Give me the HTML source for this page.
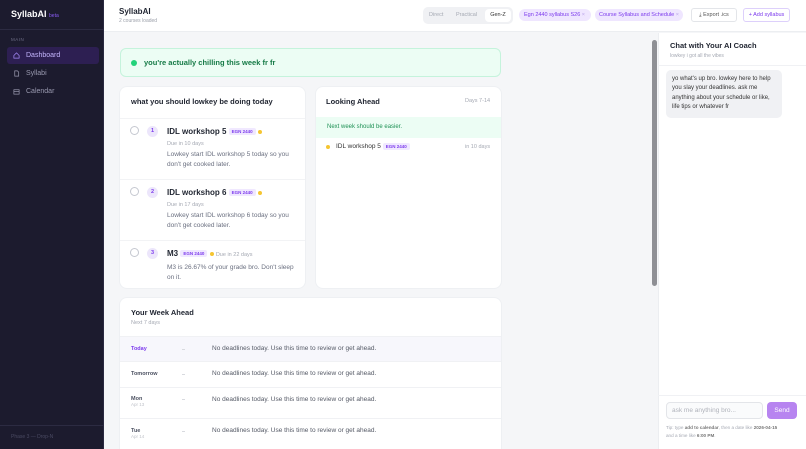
<!DOCTYPE html>
<html style="width:806px;height:449px;overflow:hidden"><head><meta charset="utf-8"><style>
*{box-sizing:border-box;margin:0;padding:0}
body{width:806px;height:449px;overflow:hidden;font-family:"Liberation Sans",sans-serif;background:#f5f6f8;position:relative;color:#1f2430}
.a{position:absolute}
.sb{left:0;top:0;width:104px;height:449px;background:#1c1b2e;border-right:1px solid #2a2940}
.nav{position:absolute;left:7px;width:92px;height:17px;font-size:7px;color:#9a9ab0;padding-left:19px;line-height:17px;border-radius:3px}
.nav svg{position:absolute;left:6px;top:5px}
.card{position:absolute;background:#fff;border-radius:7px;box-shadow:0 0 0 1px #eef0f3}
.tag{display:inline-block;background:#f0e8ff;color:#7c3aed;font-size:4.5px;font-weight:bold;padding:1px 3px;border-radius:2px;vertical-align:middle}
.dot{display:inline-block;width:4px;height:4px;border-radius:50%;background:#f5c531;vertical-align:middle}
.chk{position:absolute;width:9px;height:9px;border:1px solid #c5c8d0;border-radius:50%}
.num{position:absolute;width:11px;height:11px;border-radius:50%;background:#ece6fb;color:#7c3aed;font-size:5.5px;font-weight:bold;text-align:center;line-height:11px}
.t{position:absolute;font-size:8px;font-weight:bold;color:#1f2430}
.s{position:absolute;font-size:5.5px;color:#a5a9b3}
.d{position:absolute;font-size:6.5px;color:#6b7080;line-height:9.5px}
.row{position:absolute;left:0;width:381px;border-top:1px solid #f0f1f4}
.row .l{position:absolute;left:11px;font-size:5.5px;font-weight:bold;color:#4b5060}
.row .m{position:absolute;left:92px;font-size:6.5px;color:#555a66}
.row .x{position:absolute;left:62px;width:3px;height:1px;background:#d8dadf}
</style></head><body>
<div class="a sb">
 <div class="a" style="left:11px;top:9px;font-size:9px;font-weight:bold;color:#fff">SyllabAI <span style="font-size:5px;color:#8b5cf6;font-weight:normal">beta</span></div>
 <div class="a" style="left:0;top:29px;width:104px;height:1px;background:#2c2b42"></div>
 <div class="a" style="left:11px;top:37px;font-size:4.5px;color:#6e6e86;letter-spacing:.5px">MAIN</div>
 <div class="nav" style="top:47px;background:#2d1f52;color:#c4b5fd"><svg width="7" height="7" viewBox="0 0 8 8"><path d="M1 4L4 1L7 4V7H1Z" fill="none" stroke="#a78bfa" stroke-width=".8"/></svg>Dashboard</div>
 <div class="nav" style="top:65px"><svg width="7" height="7" viewBox="0 0 8 8"><path d="M2 1H5L6.5 2.5V7H2Z" fill="none" stroke="#9a9ab0" stroke-width=".8"/></svg>Syllabi</div>
 <div class="nav" style="top:83px"><svg width="7" height="7" viewBox="0 0 8 8"><rect x="1" y="2" width="6" height="5" fill="none" stroke="#9a9ab0" stroke-width=".8"/><path d="M1 4H7" stroke="#9a9ab0" stroke-width=".8"/></svg>Calendar</div>
 <div class="a" style="left:0;top:425px;width:104px;height:1px;background:#2c2b42"></div>
 <div class="a" style="left:11px;top:434px;font-size:5px;color:#4a4a62">Phase 3 — Drop-N</div>
</div>
<div class="a" style="left:104px;top:0;width:702px;height:32px;background:#fff;border-bottom:1px solid #eceef1"></div>
<div class="a" style="left:119px;top:7px;font-size:8px;font-weight:bold">SyllabAI</div>
<div class="a" style="left:119px;top:18px;font-size:5px;color:#9ca0aa">2 courses loaded</div>
<div class="a" style="left:423px;top:7px;width:90px;height:17px;background:#f0f1f4;border-radius:5px;font-size:5.5px;color:#a5a9b3">
 <span class="a" style="left:6px;top:5px">Direct</span><span class="a" style="left:33px;top:5px">Practical</span>
 <span class="a" style="left:62px;top:2px;width:26px;height:13px;background:#fff;border-radius:4px;color:#333;text-align:center;line-height:13px">Gen-Z</span></div>
<div class="a" style="left:519px;top:9px;width:72px;height:12px;background:#efe6ff;border-radius:6px;font-size:5.5px;color:#7c3aed;line-height:12px;padding-left:5px">Egn 2440 syllabus S26 <span style="color:#b9a3e8">×</span></div>
<div class="a" style="left:595px;top:9px;width:88px;height:12px;background:#efe6ff;border-radius:6px;font-size:5.5px;color:#7c3aed;line-height:12px;padding-left:4px">Course Syllabus and Schedule <span style="color:#b9a3e8">×</span></div>
<div class="a" style="left:691px;top:8px;width:46px;height:14px;border:1px solid #e3e5e9;border-radius:3px;font-size:5.5px;color:#555;line-height:12px;text-align:center">⤓ Export .ics</div>
<div class="a" style="left:743px;top:8px;width:47px;height:14px;border:1px solid #ddd0fb;border-radius:3px;font-size:5.5px;color:#7c3aed;line-height:12px;text-align:center">+ Add syllabus</div>

<div class="a" style="left:120px;top:48px;width:381px;height:29px;background:#ecfdf4;border:1px solid #c5f3dc;border-radius:6px"></div>
<div class="a" style="left:131px;top:60px;width:6px;height:6px;border-radius:50%;background:#22d37a"></div>
<div class="a" style="left:144px;top:58px;font-size:7.5px;font-weight:bold;color:#157a46">you're actually chilling this week fr fr</div>

<div class="card" style="left:120px;top:87px;width:185px;height:201px">
 <div class="t" style="left:11px;top:10px;font-size:7.5px">what you should lowkey be doing today</div>
 <div class="a" style="left:0;top:31px;width:185px;height:1px;background:#f2f3f5"></div>
 <div class="chk" style="left:10px;top:39px"></div><div class="num" style="left:27px;top:39px">1</div>
 <div class="t" style="left:47px;top:40px">IDL workshop 5 <span class="tag">EGN 2440</span> <span class="dot"></span></div>
 <div class="s" style="left:47px;top:54px">Due in 10 days</div>
 <div class="d" style="left:47px;top:63px">Lowkey start IDL workshop 5 today so you<br>don't get cooked later.</div>
 <div class="a" style="left:0;top:92px;width:185px;height:1px;background:#f2f3f5"></div>
 <div class="chk" style="left:10px;top:100px"></div><div class="num" style="left:27px;top:100px">2</div>
 <div class="t" style="left:47px;top:101px">IDL workshop 6 <span class="tag">EGN 2440</span> <span class="dot"></span></div>
 <div class="s" style="left:47px;top:115px">Due in 17 days</div>
 <div class="d" style="left:47px;top:124px">Lowkey start IDL workshop 6 today so you<br>don't get cooked later.</div>
 <div class="a" style="left:0;top:153px;width:185px;height:1px;background:#f2f3f5"></div>
 <div class="chk" style="left:10px;top:161px"></div><div class="num" style="left:27px;top:161px">3</div>
 <div class="t" style="left:47px;top:162px">M3 <span class="tag">EGN 2440</span> <span class="dot"></span> <span style="font-size:5.5px;color:#a5a9b3;font-weight:normal">Due in 22 days</span></div>
 <div class="d" style="left:47px;top:176px">M3 is 26.67% of your grade bro. Don't sleep<br>on it.</div>
</div>

<div class="card" style="left:316px;top:87px;width:185px;height:201px;overflow:hidden">
 <div class="t" style="left:10px;top:10px;font-size:7.5px">Looking Ahead</div>
 <div class="s" style="left:149px;top:11px">Days 7-14</div>
 <div class="a" style="left:0;top:30px;width:185px;height:21px;background:#ecfdf4;font-size:6px;color:#1e9155;line-height:21px;padding-left:11px">Next week should be easier.</div>
 <div class="a" style="left:10px;top:58px;width:4px;height:4px;border-radius:50%;background:#f5c531"></div>
 <div class="a" style="left:20px;top:56px;font-size:6.5px;color:#333">IDL workshop 5 <span class="tag">EGN 2440</span></div>
 <div class="s" style="left:149px;top:57px">in 10 days</div>
</div>

<div class="card" style="left:120px;top:298px;width:381px;height:151px;border-radius:7px 7px 0 0;overflow:hidden">
 <div class="t" style="left:11px;top:10px;font-size:7.5px">Your Week Ahead</div>
 <div class="s" style="left:11px;top:22px">Next 7 days</div>
 <div class="row" style="top:38px;height:25px;background:#f7f7fc"><span class="l" style="top:9px;color:#7c3aed">Today</span><span class="x" style="top:12px"></span><span class="m" style="top:8px">No deadlines today. Use this time to review or get ahead.</span></div>
 <div class="row" style="top:63px;height:26px"><span class="l" style="top:9px">Tomorrow</span><span class="x" style="top:12px"></span><span class="m" style="top:8px">No deadlines today. Use this time to review or get ahead.</span></div>
 <div class="row" style="top:89px;height:31px"><span class="l" style="top:8px">Mon<br><span style="font-weight:normal;color:#c0c3ca;font-size:4.5px">Apr 13</span></span><span class="x" style="top:11px"></span><span class="m" style="top:8px">No deadlines today. Use this time to review or get ahead.</span></div>
 <div class="row" style="top:120px;height:40px"><span class="l" style="top:9px">Tue<br><span style="font-weight:normal;color:#c0c3ca;font-size:4.5px">Apr 14</span></span><span class="x" style="top:12px"></span><span class="m" style="top:8px">No deadlines today. Use this time to review or get ahead.</span></div>
</div>

<div class="a" style="left:652px;top:40px;width:5px;height:246px;background:#8f9095;border-radius:3px"></div>
<div class="a" style="left:658px;top:33px;width:148px;height:416px;background:#fff;border-left:1px solid #eceef1"></div>
<div class="a" style="left:670px;top:41px;font-size:7.5px;font-weight:bold">Chat with Your AI Coach</div>
<div class="a" style="left:670px;top:53px;font-size:5px;color:#a5a9b3">lowkey i got all the vibes</div>
<div class="a" style="left:658px;top:65px;width:148px;height:1px;background:#f0f1f4"></div>
<div class="a" style="left:666px;top:70px;width:116px;height:48px;background:#f0f1f4;border-radius:5px;font-size:6px;color:#333;line-height:9.3px;padding:5px 6px">yo what's up bro. lowkey here to help you slay your deadlines. ask me anything about your schedule or like, life tips or whatever fr</div>
<div class="a" style="left:658px;top:395px;width:148px;height:1px;background:#f0f1f4"></div>
<div class="a" style="left:666px;top:402px;width:97px;height:17px;border:1px solid #e3e5e9;background:#fafbfc;border-radius:4px;font-size:6.5px;color:#b0b3bb;line-height:15px;padding-left:5px">ask me anything bro...</div>
<div class="a" style="left:767px;top:402px;width:30px;height:17px;background:#b784f0;border-radius:4px;font-size:6.5px;color:#fff;line-height:17px;text-align:center">Send</div>
<div class="a" style="left:666px;top:424px;font-size:4.6px;color:#a5a9b3;line-height:8px">Tip: type <b style="color:#777">add to calendar</b>, then a date like <b style="color:#777">2026-04-15</b><br>and a time like <b style="color:#777">6:00 PM</b>.</div>
</body></html>
